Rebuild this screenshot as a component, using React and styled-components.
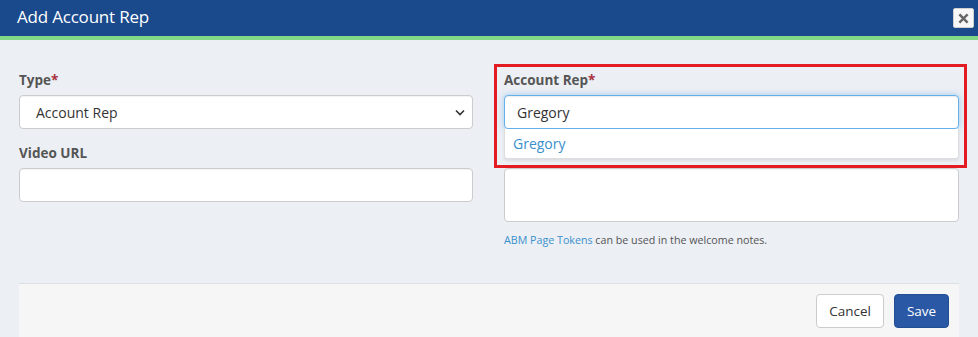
import React from "react";
import styled, { createGlobalStyle } from "styled-components";

const Global = createGlobalStyle`
  html, body { margin: 0; padding: 0; }
  body {
    background: #eceff4;
    font-family: "Open Sans", "Noto Sans", sans-serif;
    color: #333;
    overflow: hidden;
  }
  * { box-sizing: border-box; }
`;

const Modal = styled.div`
  width: 978px;
  height: 337px;
  background: #eceff4;
  display: flex;
  flex-direction: column;
`;

const Header = styled.div`
  height: 40px;
  background: #1a4a8c;
  border-bottom: 4px solid #81d886;
  display: flex;
  align-items: center;
  justify-content: space-between;
  padding: 0 4px 4px 17px;
`;

const Title = styled.h1`
  margin: 0;
  font-size: 17px;
  font-weight: 400;
  color: #fff;
  letter-spacing: -0.2px;
`;

const CloseButton = styled.button`
  width: 21px;
  height: 20px;
  margin-top: 4px;
  padding: 0;
  border: 1px solid #d0d0d0;
  border-radius: 2px;
  background: #f7f7f7;
  display: flex;
  align-items: center;
  justify-content: center;
`;

const Body = styled.div`
  padding: 30px 19px 0;
  display: grid;
  grid-template-columns: 454px 455px;
  column-gap: 31px;
`;

const Column = styled.div`
  position: relative;
  display: flex;
  flex-direction: column;
`;

const Group = styled.div`
  display: flex;
  flex-direction: column;
  margin-top: ${(p) => p.$mt || 0}px;
`;

const Label = styled.label`
  height: 20px;
  line-height: 20px;
  margin-bottom: 5px;
  font-size: 13.5px;
  font-weight: 700;
  color: #555;
`;

const Req = styled.span`
  color: #a8333f;
`;

const Field = styled.div`
  position: relative;
  height: ${(p) => p.$h || 34}px;
  background: #fff;
  border: 1px solid ${(p) => (p.$focus ? "#66afe9" : "#ccc")};
  border-radius: 4px;
  box-shadow: ${(p) =>
    p.$focus
      ? "inset 0 1px 1px rgba(0,0,0,.075), 0 0 6px rgba(102,175,233,.6)"
      : "inset 0 1px 1px rgba(0,0,0,.05)"};
  display: flex;
  align-items: center;
  padding: 0 ${(p) => p.$px || 12}px;
  font-size: 14px;
  color: #333;
`;

const Chevron = styled.svg`
  position: absolute;
  right: 7px;
  top: 13px;
`;

const Menu = styled.div`
  position: absolute;
  top: 59px;
  left: 0;
  right: 0;
  height: 30px;
  background: #fff;
  border: 1px solid #ddd;
  border-top: none;
  border-radius: 0 0 3px 3px;
  box-shadow: 0 2px 3px rgba(0, 0, 0, 0.08);
  display: flex;
  align-items: center;
  padding-left: 8px;
  font-size: 14px;
  color: #3a8fcd;
  z-index: 2;
`;

const Highlight = styled.div`
  position: absolute;
  top: -6px;
  left: -10px;
  width: 473px;
  height: 104px;
  border: 3px solid #e31b23;
  z-index: 3;
  pointer-events: none;
`;

const Help = styled.p`
  margin: 11px 0 0;
  font-size: 10.7px;
  line-height: 14px;
  color: #555;
`;

const Link = styled.a`
  color: #3a8fcd;
  text-decoration: none;
`;

const Footer = styled.div`
  margin: 36px 19px 0;
  flex: 1;
  background: #f6f6f6;
  border-top: 1px solid #dcdfe4;
  display: flex;
  justify-content: flex-end;
  align-items: flex-start;
  gap: 10px;
  padding: 10px 10px 0;
`;

const Button = styled.button`
  height: 34px;
  width: ${(p) => (p.$primary ? 55 : 68)}px;
  padding: 0;
  border-radius: 4px;
  border: 1px solid ${(p) => (p.$primary ? "#224e94" : "#ccc")};
  background: ${(p) => (p.$primary ? "#2a58a5" : "#fff")};
  color: ${(p) => (p.$primary ? "#fff" : "#333")};
  font-family: inherit;
  font-size: 13.5px;
`;

export default function App() {
  return (
    <Modal>
      <Global />
      <Header>
        <Title>Add Account Rep</Title>
        <CloseButton aria-label="Close">
          <svg width="11" height="11" viewBox="0 0 11 11">
            <path d="M2.2 2.2 L8.8 8.8 M8.8 2.2 L2.2 8.8" stroke="#666" strokeWidth="2.4" strokeLinecap="square" />
          </svg>
        </CloseButton>
      </Header>
      <Body>
        <Column>
          <Group>
            <Label>
              Type<Req>*</Req>
            </Label>
            <Field $px={16}>
              Account Rep
              <Chevron width="10" height="7" viewBox="0 0 10 7">
                <path d="M1 1.5 L5 5.5 L9 1.5" fill="none" stroke="#333" strokeWidth="1.6" />
              </Chevron>
            </Field>
          </Group>
          <Group $mt={14}>
            <Label>Video URL</Label>
            <Field />
          </Group>
        </Column>
        <Column>
          <Highlight />
          <Group>
            <Label>
              Account Rep<Req>*</Req>
            </Label>
            <Field $focus $px={12}>Gregory</Field>
            <Menu>Gregory</Menu>
          </Group>
          <Group $mt={14}>
            <Label aria-label="Welcome Note" />
            <Field $h={54} />
          </Group>
          <Help>
            <Link href="#">ABM Page Tokens</Link> can be used in the welcome notes.
          </Help>
        </Column>
      </Body>
      <Footer>
        <Button>Cancel</Button>
        <Button $primary>Save</Button>
      </Footer>
    </Modal>
  );
}
